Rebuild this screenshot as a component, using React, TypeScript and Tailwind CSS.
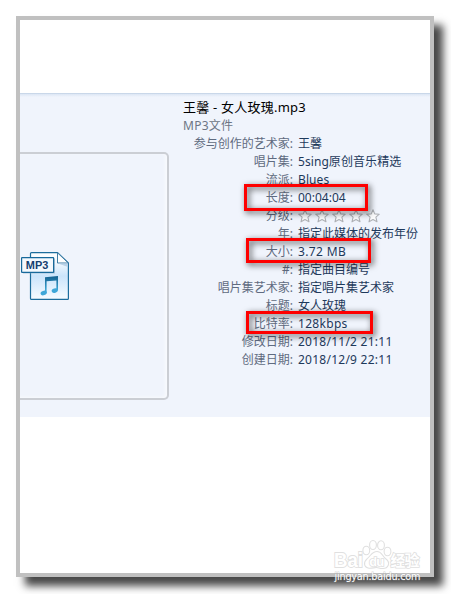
import React from 'react';

interface DetailRow {
  label: string;
  value: string;
  stars?: number;
  highlight?: string;
  spacing?: string;
}

const rows: DetailRow[] = [
  { label: '参与创作的艺术家', value: '王馨' },
  { label: '唱片集', value: '5sing原创音乐精选', spacing: 'tracking-[0.07px]' },
  { label: '流派', value: 'Blues', spacing: 'tracking-[0.1px]' },
  { label: '长度', value: '00:04:04', highlight: 'left-[61px] -top-[5px] w-[124px] h-[27px]' },
  { label: '分级', value: '', stars: 5 },
  { label: '年', value: '指定此媒体的发布年份' },
  { label: '大小', value: '3.72 MB', highlight: 'left-[63px] -top-[5px] w-[125px] h-[25px]', spacing: 'tracking-[0.35px]' },
  { label: '#', value: '指定曲目编号' },
  { label: '唱片集艺术家', value: '指定唱片集艺术家' },
  { label: '标题', value: '女人玫瑰' },
  { label: '比特率', value: '128kbps', highlight: 'left-[63px] -top-[4px] w-[127px] h-[23px]', spacing: 'tracking-[0.3px]' },
  { label: '修改日期', value: '2018/11/2 21:11', spacing: 'tracking-[0.25px]' },
  { label: '创建日期', value: '2018/12/9 22:11', spacing: 'tracking-[0.25px]' },
];

const StarIcon: React.FC = () => (
  <svg className="h-[14px] w-[14px]" viewBox="0 0 14 14" fill="#fbfbfc" stroke="#aeb1b6" strokeWidth="1.1" strokeLinejoin="round">
    <path d="M7 .8 8.7 4.9 13.3 5.2 9.9 8.2 11 12.8 7 10.6 3 12.8 4.1 8.2 .7 5.2 5.3 4.9Z" />
  </svg>
);

const Mp3Icon: React.FC = () => (
  <svg className="ml-px mt-[2px] h-[50px] w-[50px]" viewBox="0 0 50 50">
    <defs>
      <linearGradient id="page" x1="0" y1="0" x2="0" y2="1">
        <stop offset="0" stopColor="#ffffff" />
        <stop offset="0.25" stopColor="#edf6fe" />
        <stop offset="0.5" stopColor="#cbe4fb" />
        <stop offset="1" stopColor="#f8fcff" />
      </linearGradient>
      <linearGradient id="note" x1="0" y1="0" x2="0" y2="1">
        <stop offset="0" stopColor="#14618f" />
        <stop offset="1" stopColor="#43b4e4" />
      </linearGradient>
    </defs>
    <path d="M10.5 .6H36.5L47.4 11V46.5Q47.4 47.4 46.5 47.4H10.5Q9.5 47.4 9.5 46.4V1.5Q9.5 .6 10.5 .6Z" fill="url(#page)" stroke="#1d6d9c" strokeWidth="1.2" />
    <path d="M36.5 .8V11H47.2Z" fill="#fff" stroke="#3f7da5" strokeWidth="1" />
    <path d="M37 11.5H47V15Z" fill="#b9d2e8" />
    <rect x="2" y="6.5" width="32" height="15" fill="#8aaac4" opacity=".6" />
    <rect x=".6" y="5.6" width="32" height="14.8" rx=".5" fill="#f4f9fe" stroke="#17699b" strokeWidth="1.2" />
    <text x="4.8" y="16.7" fontFamily="Liberation Sans, sans-serif" fontWeight="700" fontSize="10.5" textLength="22.5" lengthAdjust="spacingAndGlyphs" fill="#153f70">MP3</text>
    <path d="M24 25.2 37 24V38H35.4V28.4L25.6 29.3V41H24Z" fill="url(#note)" />
    <ellipse cx="22.7" cy="41" rx="3.2" ry="2.2" transform="rotate(-18 22.7 41)" fill="#3fa7d8" />
    <ellipse cx="33.8" cy="38.6" rx="3.2" ry="2.2" transform="rotate(-18 33.8 38.6)" fill="#3fa7d8" />
  </svg>
);

const Watermark: React.FC = () => (
  <svg className="absolute left-[312px] top-[517px] h-[52px] w-[98px]" viewBox="0 0 98 52">
    <g fill="#fff" stroke="#e0e0e0" strokeWidth="1.1" fontFamily="Liberation Sans, Noto Sans CJK SC, sans-serif" fontWeight="700">
      <ellipse cx="34.3" cy="13.5" rx="3.4" ry="4.3" />
      <ellipse cx="41" cy="8" rx="3.4" ry="4.5" />
      <ellipse cx="49" cy="8.3" rx="3.4" ry="4.5" />
      <ellipse cx="55.5" cy="14.5" rx="3.4" ry="4.3" />
      <path d="M45 14.5C50 14.5 50 19 54 22C59 26 56 31.5 51 31.5C47 31.5 47 30.5 44.5 30.5C42 30.5 40 31.5 37 31.2C32 30.5 31 25.5 35 21.8C39 18.5 40 14.5 45 14.5Z" />
      <text x="2" y="29.5" fontSize="20" strokeWidth="1.8" paintOrder="stroke" textLength="29" lengthAdjust="spacingAndGlyphs">Bai</text>
      <text x="37.2" y="28.5" fontSize="13" strokeWidth="1.6" paintOrder="stroke" textLength="15">du</text>
      <text x="58.5" y="29.2" fontSize="15" strokeWidth="1.6" paintOrder="stroke" textLength="29">经验</text>
    </g>
    <text x="2.5" y="43.2" fontSize="9.7" fontFamily="DejaVu Sans, sans-serif" textLength="86" fill="#fff" stroke="#999" strokeOpacity=".4" strokeWidth="1.2" paintOrder="stroke">jingyan.baidu.com</text>
  </svg>
);

const Details: React.FC = () => (
  <div className="ml-[14px] pt-[4px] text-xs leading-[18px]">
    <h1 className="h-[19px] whitespace-nowrap text-[13px] leading-[19px] tracking-[0.22px] text-black">王馨 - 女人玫瑰.mp3</h1>
    <p className="h-[18px] tracking-[0.25px] text-[#6e7684]">MP3文件</p>
    <div>
      {rows.map(row => (
        <div key={row.label} className="relative flex h-[18px] whitespace-nowrap">
          <span className="w-[110px] text-right text-[#5f6b80]">{row.label}:</span>
          <span className={`ml-[5px] text-[#1e395b] ${row.spacing || ''}`}>
            {row.stars ? (
              <span className="flex h-[18px] items-center gap-[3px]">
                {Array.from({ length: row.stars }, (_, i) => <StarIcon key={i} />)}
              </span>
            ) : row.value}
          </span>
          {row.highlight && (
            <span className={`absolute z-10 border-[3px] border-[#fe0000] drop-shadow-[2px_2px_3px_rgba(0,0,0,0.75)] ${row.highlight}`} />
          )}
        </div>
      ))}
    </div>
  </div>
);

export default function App() {
  return (
    <div className="h-[594px] w-full overflow-hidden bg-white pl-4 pt-4 font-['Noto_Sans','Noto_Sans_CJK_SC',sans-serif]">
      <main className="relative h-[561px] w-[418px] border-4 border-[#c0c0c0] bg-white pt-[73px] shadow-[9px_9px_8px_rgba(0,0,0,0.72)]">
        <section className="flex h-[324px] border-t border-[#c9d7e9] bg-[linear-gradient(#dce6f4,#f0f4fc_3px)]">
          <div className="mt-[58px] flex h-[248px] w-[149px] items-center rounded-r-[5px] border-y-2 border-r-2 border-[#cbced4] shadow-[inset_-2px_-1px_3px_#f8fafd]">
            <Mp3Icon />
          </div>
          <Details />
        </section>
        <Watermark />
      </main>
    </div>
  );
}
